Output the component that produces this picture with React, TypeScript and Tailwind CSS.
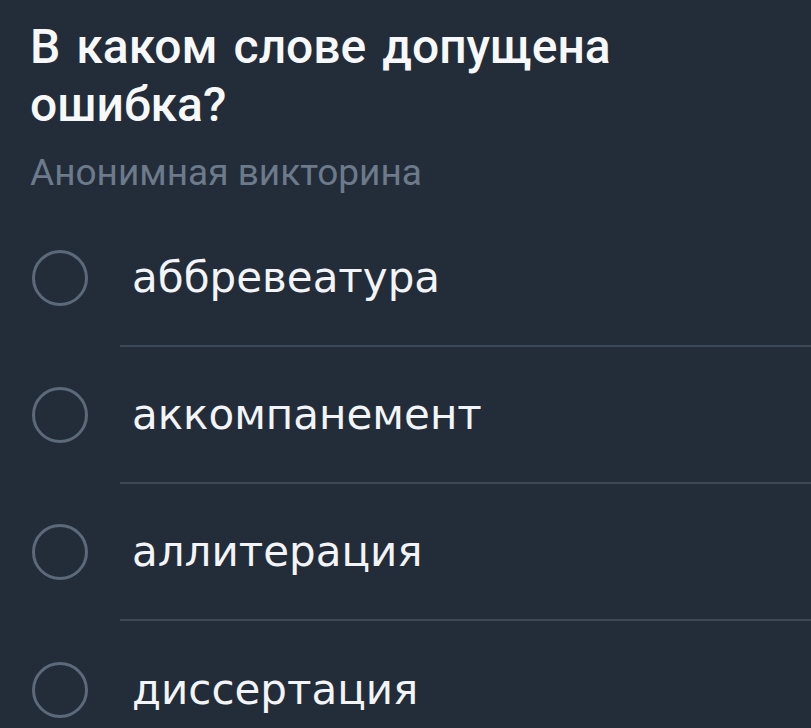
const OPTIONS = ["аббревеатура", "аккомпанемент", "аллитерация", "диссертация"];

function Radio() {
  return (
    <svg width="60" height="60" viewBox="0 0 60 60" className="shrink-0">
      <circle cx="30" cy="30" r="26.5" fill="none" stroke="#5b6979" strokeWidth="3" />
    </svg>
  );
}

export default function App() {
  return (
    <div
      className="h-[728px] w-[811px] overflow-hidden bg-[#232d3a]"
      style={{ fontFamily: "Roboto, 'Noto Sans', sans-serif" }}
    >
      {/* Question header */}
      <div className="pl-[30px] pt-[18px]">
        <h1 className="text-[48px] font-medium leading-[58px] text-[#f7f8fa] [word-spacing:4px]">
          В каком слове допущена
          <br />
          ошибка?
        </h1>
        <p className="mt-[16px] text-[37px] leading-[46px] text-[#6c7a8a]">Анонимная викторина</p>
      </div>

      {/* Answer list */}
      <div className="mt-[14px]">
        {OPTIONS.map((o, i) => (
          <div key={o} className="flex h-[137px] flex-col">
            <div className="flex flex-1 items-center pl-[30px]">
              <Radio />
              <span className="ml-[42px] font-['DejaVu_Sans',sans-serif] text-[42px] text-[#f2f4f7]">{o}</span>
            </div>
            {i < OPTIONS.length - 1 && <div className="ml-[120px] h-[2px] bg-[#3c4856]" />}
          </div>
        ))}
      </div>
    </div>
  );
}
